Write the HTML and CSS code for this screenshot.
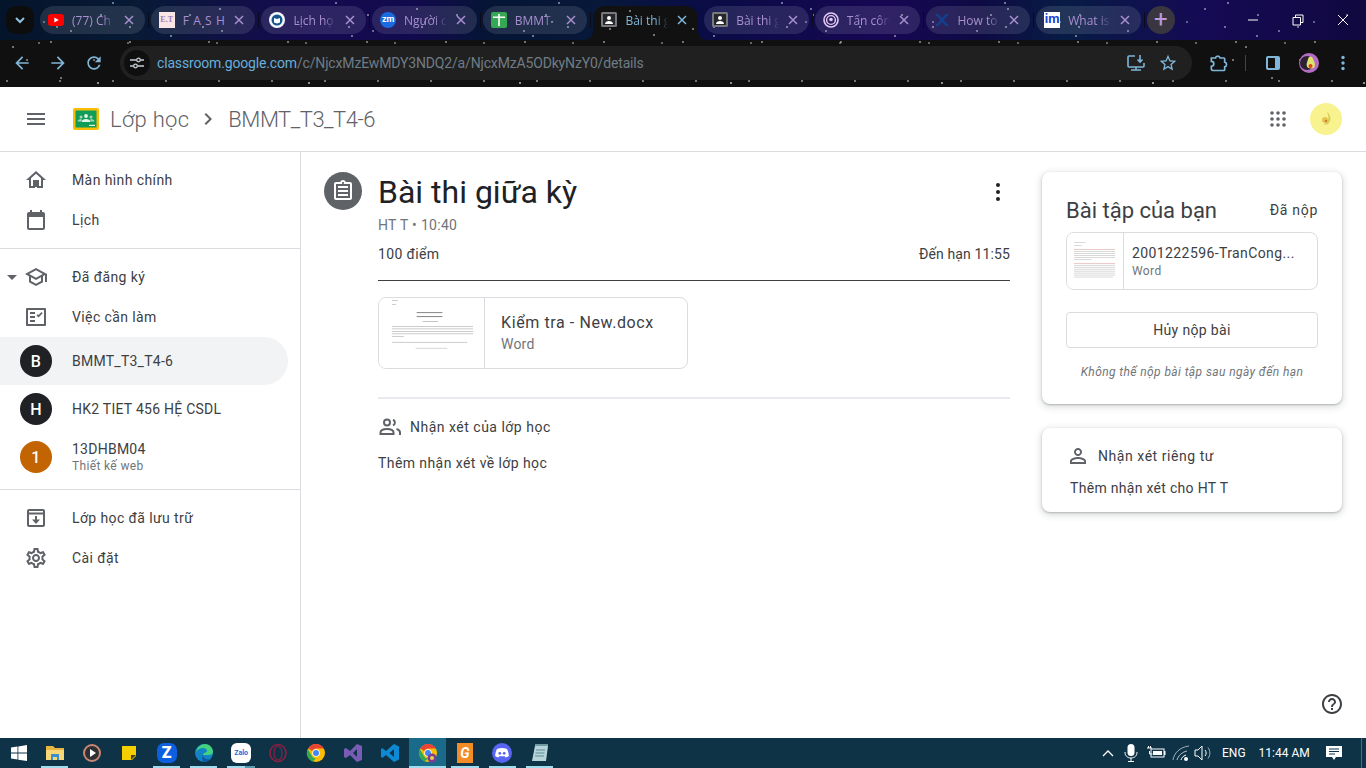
FILE: index.html
```html
<!DOCTYPE html>
<html lang="vi">
<head>
<meta charset="utf-8">
<title>Bài thi giữa kỳ</title>
<link rel="stylesheet" href="styles.css">
</head>
<body>
<svg class="sprite" aria-hidden="true"><symbol id="x" viewBox="0 0 16 16"><path d="M4 4l8 8M12 4l-8 8" fill="none" stroke="currentColor" stroke-width="1.500"/></symbol></svg>
<div class="page">
  <header class="tabstrip">
    <div class="tab-menu"><svg class="ic16" viewBox="0 0 16 16"><path d="M4 6l4 4 4-4" fill="none" stroke="#8fc1de" stroke-width="2"/></svg></div>
    <div class="tabs">
      <div class="tab"><svg class="fav" viewBox="0 0 16 16"><rect y="2" width="16" height="12" rx="3" fill="#f00"/><path d="M6.300 5.400v5.200L10.800 8z" fill="#fff"/></svg><span class="tab-title">(77) Ch</span><svg class="tab-x"><use href="#x"/></svg></div>
      <div class="tab"><div class="fav fav-et">E.T</div><span class="tab-title tab-spaced">F A S H</span><svg class="tab-x"><use href="#x"/></svg></div>
      <div class="tab"><svg class="fav" viewBox="0 0 16 16"><circle cx="8" cy="8" r="8" fill="#f4f6fa"/><circle cx="8" cy="8" r="5.500" fill="#13568f"/><path d="M5 6l3 1 3-1v4.500l-3 1-3-1z" fill="#fff"/></svg><span class="tab-title">Lịch họ</span><svg class="tab-x"><use href="#x"/></svg></div>
      <div class="tab"><div class="fav fav-zm">zm</div><span class="tab-title">Người c</span><svg class="tab-x"><use href="#x"/></svg></div>
      <div class="tab"><svg class="fav" viewBox="0 0 16 16"><rect width="16" height="16" rx="2" fill="#34a853"/><path d="M7.200 2h1.600v12H7.200zM2 4.500h12v1.600H2z" fill="#fff"/></svg><span class="tab-title">BMMT-</span><svg class="tab-x"><use href="#x"/></svg></div>
      <div class="tab tab-active"><svg class="fav" viewBox="0 0 16 16"><rect width="16" height="15" rx="1.500" fill="#77797c"/><rect x="2" y="2" width="12" height="11" fill="#26282b"/><circle cx="8" cy="6" r="2" fill="#fff"/><path d="M4 12c0-2 2-3 4-3s4 1 4 3z" fill="#fff"/></svg><span class="tab-title">Bài thi g</span><svg class="tab-x"><use href="#x"/></svg></div>
      <div class="tab"><svg class="fav" viewBox="0 0 16 16"><rect width="16" height="15" rx="1.500" fill="#77797c"/><rect x="2" y="2" width="12" height="11" fill="#26282b"/><circle cx="8" cy="6" r="2" fill="#fff"/><path d="M4 12c0-2 2-3 4-3s4 1 4 3z" fill="#fff"/></svg><span class="tab-title">Bài thi g</span><svg class="tab-x"><use href="#x"/></svg></div>
      <div class="tab"><svg class="fav" viewBox="0 0 16 16"><circle cx="8" cy="8" r="7" fill="none" stroke="#e6c9f5" stroke-width="1.600"/><circle cx="8" cy="8" r="4.400" fill="none" stroke="#e6c9f5" stroke-width="1.400"/><circle cx="8" cy="7.500" r="1.800" fill="#e6c9f5"/></svg><span class="tab-title">Tấn côn</span><svg class="tab-x"><use href="#x"/></svg></div>
      <div class="tab"><svg class="fav" viewBox="0 0 16 16"><path d="M1 2h3l4 4 4-4h3l-5.500 6L15 14h-3L8 10l-4 4H1l5.500-6z" fill="#12408f"/></svg><span class="tab-title">How to</span><svg class="tab-x"><use href="#x"/></svg></div>
      <div class="tab"><div class="fav fav-im">im</div><span class="tab-title">What is</span><svg class="tab-x"><use href="#x"/></svg></div>
    </div>
    <div class="tab-new">+</div>
    <div class="winctl">
      <svg class="ic16" viewBox="0 0 16 16"><path d="M3 8h10" stroke="#fff" fill="none"/></svg>
      <svg class="ic16" viewBox="0 0 16 16"><path d="M3 5.500h7.500V13H3zM5.500 5.500V3H13v7.500h-2.500" stroke="#fff" fill="none"/></svg>
      <svg class="ic16" viewBox="0 0 16 16"><path d="M3 3l10 10M13 3L3 13" stroke="#fff" fill="none"/></svg>
    </div>
  </header>

  <div class="toolbar">
    <div class="nav-btns">
      <svg class="ic20 tb" viewBox="0 0 24 24"><path d="M20 11H7.830l5.590-5.590L12 4l-8 8 8 8 1.410-1.410L7.830 13H20v-2z"/></svg>
      <svg class="ic20 tb" viewBox="0 0 24 24"><path d="M12 4l-1.410 1.410L16.170 11H4v2h12.170l-5.580 5.590L12 20l8-8z"/></svg>
      <svg class="ic20 tb" viewBox="0 0 24 24"><path d="M17.650 6.350C16.200 4.900 14.210 4 12 4c-4.420 0-7.990 3.580-7.990 8s3.570 8 7.990 8c3.730 0 6.840-2.550 7.730-6h-2.080c-.82 2.330-3.040 4-5.650 4-3.310 0-6-2.690-6-6s2.690-6 6-6c1.660 0 3.140.69 4.220 1.780L13 11h7V4l-2.350 2.350z"/></svg>
    </div>
    <div class="omnibox">
      <div class="site-btn"><svg class="ic16" viewBox="0 0 16 16"><g fill="none" stroke="#c8cdd2" stroke-width="1.300"><path d="M1 5h6.500M11.500 5H15M1 11h3.500M8.500 11H15"/><circle cx="9.500" cy="5" r="1.800"/><circle cx="6.500" cy="11" r="1.800"/></g></svg></div>
      <div class="url"><span class="url-host">classroom.google.com</span>/c/NjcxMzEwMDY3NDQ2/a/NjcxMzA5ODkyNzY0/details</div>
      <svg class="ic20 tb-line" viewBox="0 0 20 20"><path d="M9 3H3a1 1 0 0 0-1 1v9a1 1 0 0 0 1 1h14a1 1 0 0 0 1-1v-3M5 17h10M10 14v3M14 2v7M11.500 6.500L14 9l2.500-2.500" fill="none" stroke="currentColor" stroke-width="1.600"/></svg>
      <svg class="ic20 tb star" viewBox="0 0 24 24"><path d="M22 9.240l-7.190-.62L12 2 9.190 8.630 2 9.240l5.460 4.730L5.820 21 12 17.270 18.180 21l-1.630-7.030L22 9.240zM12 15.400l-3.760 2.270 1-4.280-3.320-2.880 4.380-.38L12 6.100l1.710 4.040 4.380.38-3.320 2.880 1 4.280L12 15.400z"/></svg>
    </div>
    <div class="tb-right">
      <svg class="ic20 tb-line" viewBox="0 0 24 24"><path d="M4 6h5a2.800 2.800 0 0 1 5.500 0H19a1 1 0 0 1 1 1v4a2.800 2.800 0 0 1 0 5.500V20a1 1 0 0 1-1 1H6a2 2 0 0 1-2-2v-3a3 3 0 0 0 0-6z" fill="none" stroke="currentColor" stroke-width="2"/></svg>
      <span class="tb-sep"></span>
      <svg class="ic20 tb-line" viewBox="0 0 20 20"><rect x="3" y="3" width="14" height="14" rx="2" fill="currentColor"/><rect x="5" y="5" width="7" height="10" fill="#101010"/></svg>
      <svg class="avatar-chrome" viewBox="0 0 20 20"><circle cx="10" cy="10" r="10" fill="#b56cc4"/><circle cx="8" cy="10" r="7" fill="#2a2230"/><path d="M11.500 3.500c2 0 3 3 4 6s.5 6-3.500 6-5-3-4-6 1.500-6 3.500-6z" fill="#dfe36a"/><circle cx="11.500" cy="13" r="2" fill="#d9401e"/></svg>
      <svg class="ic16 dots" viewBox="0 0 16 16"><circle cx="8" cy="2.500" r="1.700"/><circle cx="8" cy="8" r="1.700"/><circle cx="8" cy="13.500" r="1.700"/></svg>
    </div>
  </div>

  <div class="appbar">
    <svg class="ic24 app-menu" viewBox="0 0 24 24"><path d="M3 18h18v-2H3v2zm0-5h18v-2H3v2zm0-7v2h18V6H3z"/></svg>
    <svg class="logo" viewBox="0 0 26 22"><rect width="26" height="22" rx="2" fill="#fbbc04"/><rect x="2.500" y="2.500" width="21" height="17" fill="#0f9d58"/><circle cx="13" cy="8" r="1.900" fill="#e6f4ea"/><circle cx="8" cy="9" r="1.500" fill="#a8d5ba"/><circle cx="18" cy="9" r="1.500" fill="#a8d5ba"/><path d="M8.500 14c0-2 2.500-3 4.500-3s4.500 1 4.500 3z" fill="#e6f4ea"/><path d="M4.500 13.500c0-1.500 2-2.500 3.500-2.500l1 1-1 1.500zM21.500 13.500c0-1.500-2-2.500-3.500-2.500l-1 1 1 1.500z" fill="#a8d5ba"/><rect x="16" y="16.800" width="6" height="1.200" fill="#e6f4ea"/></svg>
    <span class="app-name">Lớp học</span>
    <svg class="crumb-sep" viewBox="0 0 24 24"><path d="M8.590 16.590L13.170 12 8.590 7.410 10 6l6 6-6 6z"/></svg>
    <span class="app-crumb">BMMT_T3_T4-6</span>
    <div class="app-right">
      <svg class="apps" viewBox="0 0 16 16"><g><circle cx="2" cy="2" r="1.800"/><circle cx="8" cy="2" r="1.800"/><circle cx="14" cy="2" r="1.800"/><circle cx="2" cy="8" r="1.800"/><circle cx="8" cy="8" r="1.800"/><circle cx="14" cy="8" r="1.800"/><circle cx="2" cy="14" r="1.800"/><circle cx="8" cy="14" r="1.800"/><circle cx="14" cy="14" r="1.800"/></g></svg>
      <svg class="acct" viewBox="0 0 32 32"><circle cx="16" cy="16" r="16" fill="#f8f28f"/><path d="M17 9c3 2 4 6 3 9s-4 5-7 3c2 0 4-1 5-4s0-6-1-8z" fill="#d8cf55"/><circle cx="15" cy="17" r="3" fill="#e7c552"/><circle cx="16" cy="18" r="1.200" fill="#cc7a32"/></svg>
    </div>
  </div>

  <div class="main">
    <nav class="sidebar">
      <div class="side-group">
        <div class="side-item"><svg class="ic24 side-ic" viewBox="0 0 24 24"><path d="M12 5.690l5 4.500V18h-2v-6H9v6H7v-7.810l5-4.500M12 3L2 12h3v8h6v-6h2v6h6v-8h3L12 3z"/><path d="M9 12h6v7H9z"/></svg><span>Màn hình chính</span></div>
        <div class="side-item"><svg class="ic24 side-ic" viewBox="0 0 24 24"><path d="M19 4h-1V2h-2v2H8V2H6v2H5C3.900 4 3 4.900 3 6v14c0 1.100.9 2 2 2h14c1.100 0 2-.9 2-2V6c0-1.100-.9-2-2-2zm0 16H5V9h14v11z"/></svg><span>Lịch</span></div>
      </div>
      <div class="side-group">
        <div class="side-item"><span class="caret"></span><svg class="ic24 side-ic" viewBox="0 0 24 24"><path d="M12 3L1 9l4 2.180v6L12 21l7-3.820v-6l2-1.090V17h2V9L12 3zm6.820 6L12 12.720 5.180 9 12 5.280 18.820 9zM17 15.990l-5 2.730-5-2.730v-3.720L12 15l5-2.730v3.720z"/></svg><span>Đã đăng ký</span></div>
        <div class="side-item"><svg class="ic24 side-ic" viewBox="0 0 24 24"><path d="M3 3h18a1 1 0 0 1 1 1v16a1 1 0 0 1-1 1H3a1 1 0 0 1-1-1V4a1 1 0 0 1 1-1zm1 2v14h16V5H4zm2 2h5v2H6zm0 4h5v2H6zm0 4h5v2H6zm8.500-2.500l-2-2 1.200-1.200.8.8 3-3 1.200 1.200z"/></svg><span>Việc cần làm</span></div>
        <div class="side-class is-active"><span class="badge badge-dark">B</span><span>BMMT_T3_T4-6</span></div>
        <div class="side-class"><span class="badge badge-dark">H</span><span>HK2 TIET 456 HỆ CSDL</span></div>
        <div class="side-class"><span class="badge badge-orange">1</span><div class="side-two"><span>13DHBM04</span><span class="side-sub">Thiết kế web</span></div></div>
      </div>
      <div class="side-group side-last">
        <div class="side-item"><svg class="ic24 side-ic" viewBox="0 0 24 24"><path d="M5 3h14a2 2 0 0 1 2 2v14a2 2 0 0 1-2 2H5a2 2 0 0 1-2-2V5a2 2 0 0 1 2-2zm0 2v1.500h14V5H5zm0 3.500V19h14V8.500H5zM11 10h2v3.500h3L12 18l-4-4.500h3z"/></svg><span>Lớp học đã lưu trữ</span></div>
        <div class="side-item"><svg class="ic24 side-ic" viewBox="0 0 24 24"><path d="M19.430 12.980c.04-.32.07-.64.07-.98 0-.34-.03-.66-.07-.98l2.110-1.650c.19-.15.24-.42.12-.64l-2-3.460c-.09-.16-.26-.25-.44-.25-.06 0-.12.01-.17.03l-2.490 1c-.52-.4-1.080-.73-1.690-.98l-.38-2.650C14.460 2.180 14.250 2 14 2h-4c-.25 0-.46.18-.49.42l-.38 2.650c-.61.25-1.170.59-1.690.98l-2.490-1c-.06-.02-.12-.03-.18-.03-.17 0-.34.09-.43.25l-2 3.460c-.13.22-.07.49.12.64l2.110 1.650c-.04.32-.07.65-.07.98 0 .33.03.66.07.98l-2.110 1.650c-.19.15-.24.42-.12.64l2 3.460c.09.16.26.25.44.25.06 0 .12-.01.17-.03l2.490-1c.52.4 1.080.73 1.690.98l.38 2.650c.03.24.24.42.49.42h4c.25 0 .46-.18.49-.42l.38-2.650c.61-.25 1.170-.59 1.690-.98l2.490 1c.06.02.12.03.18.03.17 0 .34-.09.43-.25l2-3.460c.12-.22.07-.49-.12-.64l-2.110-1.650zm-1.980-1.710c.04.31.05.52.05.73 0 .21-.02.43-.05.73l-.14 1.130.89.7 1.080.84-.7 1.210-1.270-.51-1.040-.42-.9.68c-.43.32-.84.56-1.250.73l-1.060.43-.16 1.130-.2 1.350h-1.400l-.19-1.350-.16-1.130-1.060-.43c-.43-.18-.83-.41-1.230-.71l-.91-.7-1.060.43-1.270.51-.7-1.210 1.080-.84.89-.7-.14-1.130c-.03-.31-.05-.54-.05-.74s.02-.43.05-.73l.14-1.130-.89-.7-1.080-.84.7-1.210 1.270.51 1.040.42.9-.68c.43-.32.84-.56 1.250-.73l1.060-.43.16-1.130.2-1.350h1.390l.19 1.350.16 1.130 1.060.43c.43.18.83.41 1.230.71l.91.7 1.060-.43 1.270-.51.7 1.210-1.070.85-.89.7.14 1.130zM12 8c-2.210 0-4 1.790-4 4s1.790 4 4 4 4-1.790 4-4-1.790-4-4-4zm0 6c-1.100 0-2-.9-2-2s.9-2 2-2 2 .9 2 2-.9 2-2 2z"/></svg><span>Cài đặt</span></div>
      </div>
    </nav>

    <section class="content">
      <div class="assign-ic"><svg class="ic24" viewBox="0 0 24 24"><path d="M19 3h-4.180C14.400 1.840 13.300 1 12 1c-1.300 0-2.400.84-2.820 2H5c-1.100 0-2 .9-2 2v14c0 1.100.9 2 2 2h14c1.100 0 2-.9 2-2V5c0-1.100-.9-2-2-2zm-7 0c.55 0 1 .45 1 1s-.45 1-1 1-1-.45-1-1 .45-1 1-1zm7 16H5V5h14v14z"/><path d="M7 7h10v2H7zm0 4h10v2H7zm0 4h10v2H7z"/></svg></div>
      <div class="assign">
        <div class="title-row">
          <h1 class="title">Bài thi giữa kỳ</h1>
          <svg class="ic24 more" viewBox="0 0 24 24"><circle cx="12" cy="5" r="2"/><circle cx="12" cy="12" r="2"/><circle cx="12" cy="19" r="2"/></svg>
        </div>
        <div class="meta">HT T • 10:40</div>
        <div class="points"><span>100 điểm</span><span class="due">Đến hạn 11:55</span></div>
        <div class="attach attach-big">
          <div class="thumb thumb-big">
            <svg viewBox="0 0 106 70" width="105" height="70"><g fill="#b5b5b5"><rect x="13" y="2" width="6" height=".7"/><rect x="13" y="6" width="4" height=".7"/><rect x="38" y="14" width="26" height=".9" fill="#777"/><rect x="38" y="18" width="26" height=".9" fill="#777"/><rect x="44" y="23" width="16" height=".8"/><rect x="13" y="28" width="82" height=".7"/><rect x="13" y="30.500" width="82" height=".7"/><rect x="13" y="33" width="82" height=".7"/><rect x="13" y="35.500" width="82" height=".7"/><rect x="13" y="38" width="12" height=".7"/><rect x="13" y="44" width="76" height=".7"/></g><rect x="37" y="50" width="32" height=".8" fill="#ccc"/></svg>
          </div>
          <div class="attach-text"><div class="attach-name">Kiểm tra - New.docx</div><div class="attach-type">Word</div></div>
        </div>
        <div class="divider"></div>
        <div class="cmt-head"><svg class="ic24" viewBox="0 0 24 24"><g fill="none" stroke="currentColor" stroke-width="2"><circle cx="9" cy="7.500" r="3"/><path d="M15 4.700a3 3 0 0 1 0 5.600"/><path d="M2.500 19v-1.500C2.500 15 6 14 9 14s6.500 1 6.500 3.500V19z"/><path d="M18.500 14c2 .5 3.500 1.500 3.500 3.500V20"/></g></svg><span>Nhận xét của lớp học</span></div>
        <div class="cmt-add">Thêm nhận xét về lớp học</div>
      </div>
    </section>

    <aside class="aside">
      <div class="card card-work">
        <div class="work-head"><h2 class="work-title">Bài tập của bạn</h2><span class="work-status">Đã nộp</span></div>
        <div class="attach attach-small">
          <div class="thumb thumb-small">
            <svg viewBox="0 0 57 56" width="56" height="56"><g fill="#c8c8c8"><rect x="7" y="9" width="12" height=".7"/><rect x="7" y="12" width="8" height=".7"/><rect x="7" y="16" width="42" height=".7" fill="#e0b0b0"/><rect x="7" y="18" width="42" height=".7"/><rect x="7" y="20" width="42" height=".7"/><rect x="7" y="22" width="42" height=".7"/><rect x="7" y="24" width="42" height=".7"/><rect x="7" y="26" width="18" height=".7"/><rect x="7" y="30" width="42" height=".7" fill="#e0b0b0"/><rect x="7" y="32" width="42" height=".7"/><rect x="7" y="34" width="42" height=".7"/><rect x="7" y="36" width="42" height=".7"/><rect x="7" y="38" width="42" height=".7"/><rect x="7" y="40" width="42" height=".7"/><rect x="7" y="42" width="42" height=".7"/><rect x="7" y="44" width="40" height=".7"/></g></svg>
          </div>
          <div class="attach-text"><div class="attach-name-s">2001222596-TranCong...</div><div class="attach-type-s">Word</div></div>
        </div>
        <div class="unsubmit">Hủy nộp bài</div>
        <div class="note">Không thể nộp bài tập sau ngày đến hạn</div>
      </div>
      <div class="card card-private">
        <div class="private-head"><svg class="ic24" viewBox="0 0 24 24"><path d="M12 5.900c1.160 0 2.100.94 2.100 2.100s-.94 2.100-2.100 2.100S9.900 9.160 9.900 8s.94-2.100 2.100-2.100m0 9c2.970 0 6.100 1.460 6.100 2.100v1.100H5.900V17c0-.64 3.130-2.100 6.100-2.100M12 4C9.790 4 8 5.790 8 8s1.790 4 4 4 4-1.790 4-4-1.790-4-4-4zm0 9c-2.670 0-8 1.340-8 4v3h16v-3c0-2.660-5.330-4-8-4z"/></svg><span>Nhận xét riêng tư</span></div>
        <div class="private-add">Thêm nhận xét cho HT T</div>
      </div>
    </aside>

    <svg class="help" viewBox="0 0 24 24"><path d="M11 18h2v-2h-2v2zm1-16C6.480 2 2 6.480 2 12s4.480 10 10 10 10-4.480 10-10S17.520 2 12 2zm0 18c-4.410 0-8-3.590-8-8s3.590-8 8-8 8 3.590 8 8-3.590 8-8 8zm0-14c-2.210 0-4 1.790-4 4h2c0-1.100.9-2 2-2s2 .9 2 2c0 2-3 1.750-3 5h2c0-2.250 3-2.500 3-5 0-2.210-1.790-4-4-4z"/></svg>
  </div>

  <footer class="taskbar">
    <div class="tk-start"><svg class="ic16" viewBox="0 0 16 16"><path fill="#fff" d="M0 2.400l6.500-.9v6.100H0zM7.300 1.400L16 0v7.600H7.300zM0 8.400h6.500v6.100L0 13.600zM7.300 8.400H16V16l-8.700-1.200z"/></svg></div>
    <div class="tk-items">
      <div class="tk on"><svg class="ic20" viewBox="0 0 20 20"><path d="M1 3h7l2 2h9v12H1z" fill="#e8b53f"/><path d="M1 7h18v10H1z" fill="#f6d775"/><path d="M6 11h8v6h-2v-3H8v3H6z" fill="#3a8fd0"/></svg></div>
      <div class="tk"><svg class="ic20" viewBox="0 0 20 20"><circle cx="10" cy="10" r="8" fill="#2d2f33" stroke="#c98673" stroke-width="2"/><path d="M8 6l6 4-6 4z" fill="#fff"/></svg></div>
      <div class="tk"><svg class="ic20" viewBox="0 0 20 20"><path d="M3 3h14v10l-4 4H3z" fill="#f5d000"/><path d="M17 12l-5 5v-5z" fill="#4c4224"/></svg></div>
      <div class="tk on"><div class="tk-z">Z</div></div>
      <div class="tk on"><svg class="ic20" viewBox="0 0 20 20"><circle cx="10" cy="10" r="9" fill="#1284c4"/><path d="M2 9c1-5 5-8 9-8 5 0 8 4 8 8 0 2-2 3-4 3H9c0-3 4-2 4-4 0-2-2-3-4-3-3 0-6 2-7 4z" fill="#43d17f"/><path d="M9 12c0 3 3 5 7 4-2 2-4 3-6 3-1 0-3-3-1-7z" fill="#0c5aa6"/></svg></div>
      <div class="tk on split"><div class="tk-zalo">Zalo</div></div>
      <div class="tk"><svg class="ic20" viewBox="0 0 20 20"><ellipse cx="10" cy="10" rx="8" ry="8.500" fill="none" stroke="#8c1f42" stroke-width="1.600"/><ellipse cx="10" cy="10" rx="4" ry="7" fill="none" stroke="#8c1f42" stroke-width="1.200"/></svg></div>
      <div class="tk"><svg class="ic20" viewBox="0 0 20 20"><circle cx="10" cy="10" r="9" fill="#fbbc04"/><path d="M10 1a9 9 0 0 1 7.800 4.500H10a4.500 4.500 0 0 0-4 2.500L2.300 5.300A9 9 0 0 1 10 1z" fill="#ea4335"/><path d="M1.900 6l4 6.900a4.500 4.500 0 0 0 4 2.600L6.400 18.700A9 9 0 0 1 1.900 6z" fill="#34a853"/><circle cx="10" cy="10" r="3.800" fill="#fff"/><circle cx="10" cy="10" r="3" fill="#4285f4"/></svg></div>
      <div class="tk"><svg class="ic20" viewBox="0 0 20 20"><path d="M14 1l5 2v14l-5 2-7-7-4 3-2-1V6l2-1 4 3z" fill="#7a5bb5"/><path d="M14 6l-4 4 4 4z" fill="#0e3347"/></svg></div>
      <div class="tk"><svg class="ic20" viewBox="0 0 20 20"><path d="M14 1l5 2.500v13L14 19 6 12l-3.500 2.700L1 14V6l1.500-.7L6 8z" fill="#0e8ad4"/><path d="M14 6l-4.500 4 4.500 4z" fill="#0e3347"/></svg></div>
      <div class="tk tk-current on"><svg class="ic20" viewBox="0 0 20 20"><circle cx="10" cy="10" r="9" fill="#fbbc04"/><path d="M10 1a9 9 0 0 1 7.800 4.500H10a4.500 4.500 0 0 0-4 2.500L2.300 5.300A9 9 0 0 1 10 1z" fill="#ea4335"/><path d="M1.900 6l4 6.900a4.500 4.500 0 0 0 4 2.600L6.400 18.700A9 9 0 0 1 1.900 6z" fill="#34a853"/><circle cx="10" cy="10" r="3.800" fill="#fff"/><circle cx="10" cy="10" r="3" fill="#4285f4"/><circle cx="14" cy="15" r="4.500" fill="#7d3c98"/><circle cx="14" cy="15" r="2" fill="#e8d04d"/></svg></div>
      <div class="tk on"><div class="tk-g">G</div></div>
      <div class="tk on"><svg class="ic20" viewBox="0 0 20 20"><circle cx="10" cy="10" r="10" fill="#5865f2"/><path d="M5 6c3-1.500 7-1.500 10 0 1 2 1.800 4 1.800 7-1.200 1-2.400 1.300-3.300 1.400l-.8-1.200H7.300l-.8 1.200C5.600 14.300 4.400 14 3.200 13c0-3 .8-5 1.800-7z" fill="#fff"/><circle cx="7.800" cy="10.300" r="1.400" fill="#5865f2"/><circle cx="12.200" cy="10.300" r="1.400" fill="#5865f2"/></svg></div>
      <div class="tk on"><svg class="ic20" viewBox="0 0 20 20"><path d="M5 3h13l-2 15H2z" fill="#b7d5d9"/><path d="M5 1h13v2H5z" fill="#6f9aa3"/><path d="M6 7h9M5.500 10h9M5 13h9" stroke="#5f8d96"/></svg></div>
    </div>
    <div class="tray">
      <svg class="tr-chev" viewBox="0 0 12 8"><path d="M1 7l5-5 5 5" fill="none" stroke="#fff" stroke-width="1.300"/></svg>
      <svg class="ic20 tr-mic" viewBox="0 0 20 20"><rect x="6.500" y="1" width="7" height="12" rx="3.500" fill="#fff"/><path d="M4 9c0 4 2.500 6 6 6s6-2 6-6M10 15v3M7 18.500h6" fill="none" stroke="#fff"/></svg>
      <svg class="ic20 tr-batt" viewBox="0 0 20 20"><path d="M1 5h5M2.500 3v2M4.500 3v2M3.500 8v3h3" fill="none" stroke="#fff"/><rect x="5" y="6" width="13" height="8" fill="none" stroke="#fff"/><rect x="7" y="8" width="9" height="4" fill="#fff"/><rect x="18" y="8" width="1.500" height="4" fill="#fff"/></svg>
      <svg class="ic20 tr-wifi" viewBox="0 0 20 20"><g fill="none" stroke="#fff"><path d="M2 17C3 10 9 4 18 3" opacity=".6"/><path d="M6 17c1-4 5-8 10-9" opacity=".7"/><path d="M10 17c.5-2 2-4 5-5"/></g><circle cx="15" cy="16" r="2" fill="#fff"/></svg>
      <svg class="ic20 tr-vol" viewBox="0 0 20 20"><g fill="none" stroke="#fff"><path d="M2 7h3l4-4v14l-4-4H2z"/><path d="M12 7c1.500 2 1.500 4 0 6"/><path d="M15 4.500c2.500 3.500 2.500 7.500 0 11" opacity=".6"/></g></svg>
      <span class="tr-lang">ENG</span>
      <span class="tr-time">11:44 AM</span>
      <svg class="tr-note" viewBox="0 0 16 16"><path d="M0 1h16v11H10l-2 3-2-3H0z" fill="#fff"/><path d="M3 4h10M3 6.500h10M3 9h6" stroke="#0e3347"/></svg>
    </div>
  </footer>
</div>
</body>
</html>
```

FILE: styles.css
```css
* { box-sizing: border-box; }
html, body { margin: 0; padding: 0; height: 768px; overflow: hidden; }
body { font-family: Roboto, "Noto Sans", sans-serif; color: #3c4043; background: #fff; }
.page { display: flex; flex-direction: column; height: 768px; width: 1366px; }
.sprite { display: none; }
svg { display: block; flex: none; }
.ic16 { width: 16px; height: 16px; }
.ic20 { width: 20px; height: 20px; }
.ic24 { width: 24px; height: 24px; fill: currentColor; }

/* Browser chrome */
.tabstrip {
  height: 40px; display: flex; align-items: flex-start; padding: 6px 0 0 6px;
  background-color: #0b0d44;
  background-image:
    radial-gradient(1.200px 1.200px at 23px 9px, #fff, transparent),
    radial-gradient(1.200px 1.200px at 71px 31px, #e4eeff, transparent),
    radial-gradient(1.200px 1.200px at 113px 3px, #fff, transparent),
    radial-gradient(1.200px 1.200px at 171px 36px, #fff, transparent),
    radial-gradient(1.200px 1.200px at 44px 22px, #c6d6ff, transparent),
    radial-gradient(1.200px 1.200px at 12px 15px, #fff, transparent),
    radial-gradient(1.200px 1.200px at 57px 27px, #fff, transparent),
    linear-gradient(90deg, #04142a 0%, #071a36 10%, #150a50 22%, #120a4e 30%, #051535 36%, #07183a 44%, #0a0c46 52%, #170753 65%, #0e0b44 72%, #071c44 78%, #150a55 88%, #10083f 100%);
  background-size: 197px 40px, 151px 40px, 223px 40px, 181px 40px, 127px 40px, 89px 40px, 73px 40px, 100% 100%;
}
.tab-menu { width: 28px; height: 28px; border-radius: 10px; background: #0d0d0d; display: flex; align-items: center; justify-content: center; margin-right: 6px; }
.tabs { display: flex; gap: 6px; }
.tab {
  width: 104.700px; height: 28px; border-radius: 14px; display: flex; align-items: center; padding: 0 8px;
  color: #a890cf; font-size: 12px; position: relative; font-family: "Open Sans", sans-serif;
  background: rgba(255,255,255,.11);
}
.tab::after { content: ""; position: absolute; right: -4px; top: 6px; width: 1px; height: 16px; background: #0b0b18; }
.tab-active {
  height: 34px; padding-bottom: 6px; border-radius: 12px 12px 0 0; color: #7fb6d9;
  background-color: #111;
  background-image: radial-gradient(1.200px 1.200px at 17px 23px, #fff, transparent), radial-gradient(1.200px 1.200px at 61px 29px, #fff, transparent), radial-gradient(1.200px 1.200px at 37px 5px, #fff, transparent);
  background-size: 83px 34px, 97px 34px, 71px 34px;
}
.tab-active::before, .tab-active::after { content: ""; position: absolute; bottom: 0; top: auto; width: 8px; height: 8px; background: radial-gradient(circle at 0 0, transparent 7.500px, #111 8px); }
.tab-active::before { left: -8px; }
.tab-active::after { right: -8px; background: radial-gradient(circle at 100% 0, transparent 7.500px, #111 8px); }
.fav { width: 16px; height: 16px; margin-right: 8px; flex: none; }
.fav-et { background: #fbe6e6; color: #9a7fb5; font: 700 8px/16px "Liberation Serif", serif; text-align: center; }
.fav-zm { border-radius: 50%; background: #1a6ae0; color: #fff; font: 700 9px/15px Roboto, sans-serif; text-align: center; }
.fav-im { background: #fff; color: #1645d4; font: 700 13px/14px Roboto, sans-serif; text-align: center; }
.tab-title {
  flex: 1; white-space: nowrap; overflow: hidden; min-width: 0;
  -webkit-mask-image: linear-gradient(90deg, #000 62%, transparent 88%);
  mask-image: linear-gradient(90deg, #000 62%, transparent 88%);
}
.tab-spaced { letter-spacing: .6px; -webkit-mask-image: none; mask-image: none; }
.tab-x { width: 16px; height: 16px; flex: none; }
.tab-new { width: 28px; height: 28px; margin-left: 6px; border-radius: 50%; background: #3a3640; color: #b79ade; font: 400 24px/26px Roboto, sans-serif; text-align: center; }
.winctl { margin-left: auto; display: flex; align-items: center; gap: 29px; padding: 0 15px 0 0; height: 28px; }

.toolbar {
  height: 47px; display: flex; align-items: center; padding: 0 0 1px 12px;
  background-color: #101010;
  background-image:
    radial-gradient(1.200px 1.200px at 13px 7px, #fff, transparent),
    radial-gradient(1.200px 1.200px at 61px 38px, #fff, transparent),
    radial-gradient(1.500px 1.500px at 98px 43px, #fff, transparent),
    radial-gradient(1.200px 1.200px at 39px 3px, #ddd, transparent),
    radial-gradient(1.200px 1.200px at 27px 20px, #fff, transparent),
    radial-gradient(1.200px 1.200px at 7px 41px, #fff, transparent),
    radial-gradient(1.200px 1.200px at 51px 2px, #fff, transparent);
  background-size: 137px 47px, 173px 47px, 211px 47px, 89px 47px, 67px 47px, 53px 47px, 79px 47px;
}
.nav-btns { display: flex; gap: 16px; width: 108px; flex: none; }
.tb { fill: #7fb6d9; }
.tb-line { color: #7fb6d9; }
.omnibox { width: 1072px; height: 34px; background: #202020; border-radius: 17px; display: flex; align-items: center; padding: 0 14px 0 4px; }
.site-btn { width: 26px; height: 26px; border-radius: 50%; background: #0f0f0f; display: flex; align-items: center; justify-content: center; margin-right: 7px; }
.url { flex: 1; font-size: 14px; letter-spacing: -.16px; color: #6f7c85; white-space: nowrap; }
.url-host { color: #67aede; }
.star { margin-left: 12px; }
.tb-right { display: flex; align-items: center; width: 174px; padding-left: 16px; }
.tb-sep { width: 1px; height: 16px; background: #444; margin: 0 17px; }
.avatar-chrome { width: 20px; height: 20px; margin-left: 16px; }
.dots { fill: #7fb6d9; margin-left: 16px; }

/* App bar */
.appbar { height: 65px; border-bottom: 1px solid #dadce0; display: flex; align-items: center; padding: 0 24px; background: #fff; color: #5f6368; }
.app-menu { fill: #5f6368; }
.logo { width: 26px; height: 22px; margin-left: 25px; }
.app-name { font-size: 22px; margin-left: 11px; color: #5f6368; letter-spacing: .3px; font-weight: 300; }
.crumb-sep { width: 24px; height: 24px; fill: #5f6368; margin: 0 8px 0 7px; }
.app-crumb { font-size: 22px; color: #5f6368; letter-spacing: -.5px; font-weight: 300; }
.app-right { margin-left: auto; display: flex; align-items: center; gap: 24px; }
.apps { width: 16px; height: 16px; fill: #5f6368; }
.acct { width: 32px; height: 32px; }

/* Main */
.main { flex: 1; display: flex; position: relative; min-height: 0; }
.sidebar { width: 301px; flex: none; border-right: 1px solid #dadce0; font-size: 14px; letter-spacing: .4px; color: #3c4043; }
.side-group { padding: 8px 12px 8px 0; border-bottom: 1px solid #dadce0; }
.side-last { border-bottom: 0; }
.side-item { height: 40px; display: flex; align-items: center; padding-left: 24px; position: relative; }
.side-ic { fill: #5f6368; margin-right: 24px; }
.caret { position: absolute; left: 7px; top: 18px; border: 5px solid transparent; border-top-color: #5f6368; border-bottom: 0; }
.side-class { height: 48px; display: flex; align-items: center; padding-left: 20px; border-radius: 0 24px 24px 0; letter-spacing: .25px; }
.is-active { background: #f1f3f4; }
.badge { width: 32px; height: 32px; border-radius: 50%; color: #fff; font-weight: 500; font-size: 16px; display: flex; align-items: center; justify-content: center; margin-right: 20px; flex: none; }
.badge-dark { background: #202124; }
.badge-orange { background: #c26401; }
.side-two { display: flex; flex-direction: column; line-height: 17px; }
.side-sub { font-size: 12px; color: #70757a; line-height: 16px; letter-spacing: .35px; }

.content { width: 709px; flex: none; display: flex; align-items: flex-start; padding: 20px 0 0 23px; }
.assign-ic { width: 38px; height: 38px; border-radius: 50%; background: #5f6368; color: #fff; display: flex; align-items: center; justify-content: center; margin-right: 16px; flex: none; }
.assign { width: 632px; flex: none; }
.title-row { display: flex; align-items: center; justify-content: space-between; height: 40px; }
.title { margin: 0; font-size: 32px; font-weight: 400; color: #202124; line-height: 40px; }
.more { fill: #202124; }
.meta { font-size: 14px; color: #70757a; line-height: 20px; margin-top: 3px; letter-spacing: .3px; }
.points { display: flex; justify-content: space-between; font-size: 14px; line-height: 20px; color: #3c4043; margin-top: 9px; padding-bottom: 16px; border-bottom: 1px solid #3c4043; letter-spacing: .35px; }
.due { letter-spacing: .12px; }
.attach { display: flex; border: 1px solid #dadce0; border-radius: 8px; overflow: hidden; }
.attach-big { width: 310px; height: 72px; margin-top: 16px; }
.thumb { flex: none; border-right: 1px solid #dadce0; background: #fff; }
.thumb-big { width: 106px; }
.attach-text { display: flex; flex-direction: column; justify-content: center; min-width: 0; }
.attach-big .attach-text { padding-left: 16px; }
.attach-name { font-size: 16px; line-height: 22px; color: #3c4043; letter-spacing: .6px; }
.attach-type { font-size: 14px; line-height: 20px; color: #70757a; letter-spacing: .2px; }
.divider { height: 2px; background: #e8eaed; margin-top: 28px; }
.cmt-head { display: flex; align-items: center; height: 24px; margin-top: 16px; font-size: 14px; letter-spacing: .5px; color: #5f6368; }
.cmt-head svg { margin-right: 8px; }
.cmt-head span { color: #3c4043; }
.cmt-add { font-size: 14px; line-height: 20px; color: #3c4043; margin-top: 14px; letter-spacing: .42px; }

.aside { width: 300px; flex: none; margin: 20px 0 0 32px; }
.card { background: #fff; border-radius: 8px; box-shadow: 0 1px 2px rgba(60,64,67,.3), 0 2px 6px 2px rgba(60,64,67,.15); }
.card-work { height: 232px; padding: 24px 24px 0; }
.work-head { display: flex; justify-content: space-between; align-items: center; height: 28px; }
.work-title { margin: 0; font-size: 22px; font-weight: 400; color: #3c4043; }
.work-status { font-size: 14px; color: #3c4043; letter-spacing: .7px; }
.attach-small { height: 58px; margin-top: 8px; }
.thumb-small { width: 57px; }
.attach-small .attach-text { padding-left: 8px; }
.attach-name-s { font-size: 14px; line-height: 20px; color: #3c4043; letter-spacing: .4px; white-space: nowrap; }
.attach-type-s { font-size: 12px; line-height: 16px; color: #70757a; letter-spacing: .4px; }
.unsubmit { height: 36px; margin-top: 22px; border: 1px solid #dadce0; border-radius: 4px; display: flex; align-items: center; justify-content: center; font-size: 14px; color: #3c4043; letter-spacing: .35px; }
.note { font-size: 12px; font-style: italic; color: #70757a; text-align: center; margin-top: 16px; line-height: 16px; letter-spacing: .4px; }
.card-private { height: 84px; margin-top: 24px; padding: 16px 28px 0; }
.private-head { display: flex; align-items: center; height: 24px; font-size: 14px; color: #3c4043; letter-spacing: .55px; }
.private-head svg { fill: #5f6368; margin: 0 8px 0 -4px; }
.private-add { font-size: 14px; line-height: 20px; color: #3c4043; margin-top: 10px; letter-spacing: .3px; }
.help { position: absolute; right: 22px; bottom: 22px; width: 24px; height: 24px; fill: #3c4043; }

/* Taskbar */
.taskbar { height: 30px; background: #0e3347; display: flex; align-items: stretch; color: #fff; }
.tk-start { width: 36px; display: flex; align-items: center; justify-content: center; flex: none; padding-left: 2px; }
.tk-items { display: flex; }
.tk { width: 37.300px; display: flex; align-items: center; justify-content: center; position: relative; }
.tk.on::after { content: ""; position: absolute; left: 5px; right: 5px; bottom: 0; height: 2px; background: #9fdcee; }
.tk.split::after { background: linear-gradient(90deg, #9fdcee 65%, #5a98ad 65%); }
.tk-current { background: #1a6a89; }
.tk-current.on::after { left: 0; right: 0; }
.tk-z { width: 20px; height: 20px; border-radius: 7px; background: #0e5fe0; color: #fff; font: 900 16px/20px Roboto, sans-serif; text-align: center; }
.tk-zalo { width: 20px; height: 20px; border-radius: 6px; background: #fff; color: #1a6ae0; font: 700 7px/20px Roboto, sans-serif; text-align: center; }
.tk-g { width: 16px; height: 20px; background: #f28c26; color: #fff; font: italic 700 14px/20px Roboto, sans-serif; text-align: center; }
.tray { margin-left: auto; display: flex; align-items: center; font-size: 12px; width: 276px; position: relative; padding-left: 12px; }
.tray::after { content: ""; position: absolute; right: 4px; top: 0; bottom: 0; width: 1px; background: #4d6c7d; }
.tr-chev { width: 12px; height: 8px; }
.tr-mic { margin-left: 7px; }
.tr-batt { margin-left: 5px; }
.tr-wifi { margin-left: 5px; }
.tr-vol { margin-left: 2px; }
.tr-lang { margin-left: 9px; }
.tr-time { margin-left: 13px; }
.tr-note { width: 16px; height: 16px; margin-left: 16px; }
```
